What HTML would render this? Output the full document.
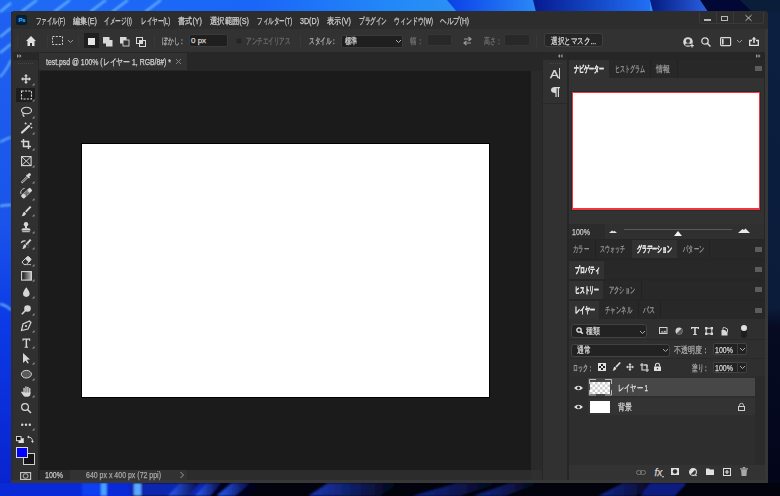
<!DOCTYPE html>
<html><head><meta charset="utf-8">
<style>
html,body{margin:0;padding:0;}
body{width:780px;height:496px;position:relative;overflow:hidden;background:#1a5ae6;font-family:"Liberation Sans",sans-serif;color:#cfcfcf;font-size:9px;}
.a{position:absolute;}
.t{position:absolute;white-space:nowrap;line-height:10px;height:10px;-webkit-text-stroke:0.25px currentColor;}
.t>span{display:inline-block;transform-origin:0 50%;}
svg{position:absolute;overflow:visible;}
</style></head><body>
<svg style="left:0;top:0" width="780" height="496" viewBox="0 0 780 496">
<defs>
<linearGradient id="wt" x1="0" y1="0" x2="1" y2="0">
<stop offset="0" stop-color="#1f6af4"/><stop offset="0.33" stop-color="#1a66f8"/><stop offset="0.5" stop-color="#2288f8"/><stop offset="0.58" stop-color="#2a90f5"/>
</linearGradient>
<linearGradient id="wt2" x1="0" y1="0" x2="1" y2="0">
<stop offset="0" stop-color="#0a40e8"/><stop offset="1" stop-color="#2a88f6"/>
</linearGradient>
<linearGradient id="wt3" x1="0" y1="0" x2="1" y2="0">
<stop offset="0" stop-color="#061a90"/><stop offset="1" stop-color="#2070f5"/>
</linearGradient>
<linearGradient id="wt4" x1="0" y1="0" x2="1" y2="0">
<stop offset="0" stop-color="#041a80"/><stop offset="1" stop-color="#2a60e0"/>
</linearGradient>
<linearGradient id="wl" x1="0" y1="0" x2="0" y2="1">
<stop offset="0" stop-color="#1e62f2"/><stop offset="0.45" stop-color="#1a54ea"/><stop offset="0.65" stop-color="#0c3ae6"/><stop offset="1" stop-color="#0822cc"/>
</linearGradient>
<linearGradient id="wr" x1="0" y1="0" x2="0" y2="1">
<stop offset="0" stop-color="#0c1f40"/><stop offset="0.62" stop-color="#0b1c3a"/><stop offset="0.66" stop-color="#060b22"/><stop offset="1" stop-color="#03051a"/>
</linearGradient>
<filter id="bl" x="-50%" y="-50%" width="200%" height="200%"><feGaussianBlur stdDeviation="1"/></filter>
</defs>
<rect width="780" height="496" fill="#0b1c3a"/>
<rect x="0" y="0" width="11" height="496" fill="url(#wl)"/>
<rect x="768" y="0" width="12" height="496" fill="url(#wr)"/>
<rect x="0" y="0" width="780" height="12" fill="url(#wt)"/>
<polygon points="447,0 535,0 535,12 457,12" fill="url(#wt2)"/>
<polygon points="533,0 650,0 650,12 536,12" fill="url(#wt3)"/>
<polygon points="650,0 700,0 708,12 653,12" fill="url(#wt4)"/>
<polygon points="700,0 750,0 755,12 708,12" fill="#020836"/>
<polygon points="740,0 780,0 780,12 752,12" fill="#0a1e3a"/>
<g stroke="#80ccff" stroke-width="1.8" filter="url(#bl)" opacity="0.85">
<path d="M21 12 L37 0 M54 12 L70 0 M90 12 L106 0 M112 12 L128 0 M145 12 L161 0"/>
<path d="M0 12 L11 3 M0 37 L11 28 M0 53 L11 44 M0 77 Q6 71 11 60 M0 142 Q6 139 11 137 M0 206 Q6 205 11 205 M0 304 Q6 305 11 310" fill="none"/>
</g>
<rect x="0" y="483" width="780" height="13" fill="#02030c"/>
<rect x="0" y="483" width="132" height="13" fill="#0a2ad8"/>
<linearGradient id="bb" x1="0" y1="0" x2="1" y2="0"><stop offset="0" stop-color="#2a5cff"/><stop offset="1" stop-color="#050a40"/></linearGradient>
<linearGradient id="bb2" x1="0" y1="0" x2="1" y2="0"><stop offset="0" stop-color="#1a38b8"/><stop offset="1" stop-color="#02030c"/></linearGradient>
<linearGradient id="bb3" x1="0" y1="0" x2="1" y2="0"><stop offset="0" stop-color="#142a9a"/><stop offset="1" stop-color="#02030c"/></linearGradient>
<g filter="url(#bl)">
<rect x="82" y="483" width="20" height="13" fill="#1040f0"/>
<rect x="101" y="483" width="6" height="13" fill="#4aa0ff"/>
<rect x="130" y="483" width="80" height="13" fill="#0a28b0"/>
<rect x="134" y="483" width="7" height="13" fill="#5aa8ff"/>
<polygon points="168,496 180,483 200,483 188,496" fill="url(#bb)"/>
<polygon points="195,496 207,483 222,483 210,496" fill="url(#bb)"/>
<polygon points="210,496 222,483 260,483 250,496" fill="#03051a"/>
<polygon points="217,496 232,483 250,483 235,496" fill="url(#bb)"/>
<polygon points="308,496 328,483 400,483 380,496" fill="url(#bb2)"/>
<polygon points="412,496 457,483 500,483 460,496" fill="url(#bb3)"/>
<polygon points="473,496 510,483 540,483 505,496" fill="url(#bb3)"/>
<polygon points="598,496 623,483 660,483 635,496" fill="url(#bb3)"/>
<polygon points="640,496 650,483 687,483 675,496" fill="#0a1a80"/>
</g>
</svg>
<div class="a" style="left:11px;top:11px;width:757px;height:472px;background:#2d2d2d;border-radius:3px 3px 0 0;"></div>
<div class="a" style="left:765px;top:29px;width:3px;height:454px;background:#373737;"></div>
<div class="a" style="left:11px;top:480px;width:757px;height:3px;background:#373737;"></div>
<div class="a" style="left:13px;top:29px;width:752px;height:23px;background:#323232;"></div>
<div class="a" style="left:13px;top:52px;width:25px;height:8px;background:#282828;"></div>
<div class="a" style="left:13px;top:60px;width:25px;height:420px;background:#303030;"></div>
<div class="a" style="left:38px;top:52px;width:2px;height:428px;background:#242424;"></div>
<div class="a" style="left:38px;top:52px;width:504px;height:19px;background:#272727;"></div>
<div class="a" style="left:39px;top:53px;width:148px;height:17px;background:#323232;"></div>
<div class="a" style="left:40px;top:71px;width:491px;height:399px;background:#1b1b1b;"></div>
<div class="a" style="left:531px;top:71px;width:11px;height:409px;background:#2a2a2a;"></div>
<div class="a" style="left:40px;top:470px;width:502px;height:10px;background:#2c2c2c;"></div>
<div class="a" style="left:531px;top:470px;width:11px;height:10px;background:#2f2f2f;"></div>
<div class="a" style="left:40px;top:470px;width:30px;height:10px;background:#2a2a2a;"></div>
<div class="a" style="left:70px;top:470px;width:117px;height:10px;background:#323232;"></div>
<div class="a" style="left:81px;top:143px;width:409px;height:255px;background:#000;"></div>
<div class="a" style="left:82px;top:144px;width:407px;height:253px;background:#fff;"></div>
<div class="a" style="left:542px;top:52px;width:1px;height:428px;background:#262626;"></div>
<div class="a" style="left:567px;top:52px;width:2px;height:428px;background:#262626;"></div>
<div class="a" style="left:543px;top:52px;width:24px;height:8px;background:#282828;"></div>
<div class="a" style="left:543px;top:60px;width:24px;height:420px;background:#313131;"></div>
<div class="a" style="left:543px;top:103px;width:24px;height:1px;background:#282828;"></div>
<div class="a" style="left:569px;top:52px;width:196px;height:428px;background:#262626;"></div>
<div class="a" style="left:569px;top:60px;width:195px;height:18px;background:#282828;"></div>
<div class="a" style="left:569px;top:60px;width:40px;height:18px;background:#323232;"></div>
<div class="a" style="left:569px;top:78px;width:195px;height:146px;background:#323232;"></div>
<div class="a" style="left:571px;top:91px;width:190px;height:120px;background:#272b2b;"></div>
<div class="a" style="left:572px;top:92px;width:188px;height:118px;background:#f0363c;"></div>
<div class="a" style="left:573px;top:93px;width:186px;height:115px;background:#fff;"></div>
<div class="a" style="left:569px;top:224px;width:36px;height:15px;background:#2b2b2b;"></div>
<div class="a" style="left:605px;top:224px;width:159px;height:15px;background:#303030;"></div>
<div class="a" style="left:569px;top:240px;width:195px;height:18px;background:#282828;"></div>
<div class="a" style="left:632px;top:240px;width:45px;height:18px;background:#323232;"></div>
<div class="a" style="left:569px;top:261px;width:195px;height:18px;background:#282828;"></div>
<div class="a" style="left:569px;top:261px;width:35px;height:18px;background:#323232;"></div>
<div class="a" style="left:569px;top:281px;width:195px;height:18px;background:#282828;"></div>
<div class="a" style="left:569px;top:281px;width:34px;height:18px;background:#323232;"></div>
<div class="a" style="left:569px;top:301px;width:195px;height:18px;background:#282828;"></div>
<div class="a" style="left:569px;top:301px;width:30px;height:18px;background:#323232;"></div>
<div class="a" style="left:569px;top:319px;width:196px;height:161px;background:#2f2f2f;"></div>
<div class="a" style="left:569px;top:376px;width:186px;height:89px;background:#2e2e2e;"></div>
<div class="a" style="left:755px;top:376px;width:10px;height:89px;background:#2b2b2b;"></div>
<div class="a" style="left:588px;top:378px;width:167px;height:18px;background:#474747;"></div>
<div class="a" style="left:588px;top:398px;width:167px;height:17px;background:#333333;"></div>
<div class="a" style="left:569px;top:465px;width:196px;height:15px;background:#333333;"></div>
<div class="a" style="left:16px;top:15px;width:10.5px;height:10px;background:#001e36;border-radius:2px;"></div>
<div class="t" style="left:18.6px;top:15.2px;font-size:6px;font-weight:bold;color:#31a8ff;letter-spacing:-0.35px;-webkit-text-stroke:0.15px #31a8ff;">Ps</div>
<div class="t fit" style="left:36px;top:15.5px;width:29px;font-size:9px;color:#d0d0d0;">ファイル(F)</div>
<div class="t fit" style="left:73px;top:15.5px;width:24px;font-size:9px;color:#d0d0d0;">編集(E)</div>
<div class="t fit" style="left:104px;top:15.5px;width:28px;font-size:9px;color:#d0d0d0;">イメージ(I)</div>
<div class="t fit" style="left:141px;top:15.5px;width:29px;font-size:9px;color:#d0d0d0;">レイヤー(L)</div>
<div class="t fit" style="left:178px;top:15.5px;width:24px;font-size:9px;color:#d0d0d0;">書式(Y)</div>
<div class="t fit" style="left:210px;top:15.5px;width:39px;font-size:9px;color:#d0d0d0;">選択範囲(S)</div>
<div class="t fit" style="left:257px;top:15.5px;width:35px;font-size:9px;color:#d0d0d0;">フィルター(T)</div>
<div class="t fit" style="left:300px;top:15.5px;width:19px;font-size:9px;color:#d0d0d0;">3D(D)</div>
<div class="t fit" style="left:327px;top:15.5px;width:24px;font-size:9px;color:#d0d0d0;">表示(V)</div>
<div class="t fit" style="left:359px;top:15.5px;width:28px;font-size:9px;color:#d0d0d0;">プラグイン</div>
<div class="t fit" style="left:394px;top:15.5px;width:39px;font-size:9px;color:#d0d0d0;">ウィンドウ(W)</div>
<div class="t fit" style="left:440px;top:15.5px;width:29px;font-size:9px;color:#d0d0d0;">ヘルプ(H)</div>
<div class="a" style="left:17px;top:35px;width:1px;height:12px;background:#393939;"></div>
<div class="a" style="left:47px;top:35px;width:1px;height:12px;background:#393939;"></div>
<div class="a" style="left:78px;top:35px;width:1px;height:12px;background:#393939;"></div>
<div class="a" style="left:154px;top:35px;width:1px;height:12px;background:#393939;"></div>
<div class="a" style="left:300px;top:35px;width:1px;height:12px;background:#393939;"></div>
<div class="a" style="left:536px;top:35px;width:1px;height:12px;background:#393939;"></div>
<svg style="left:26px;top:36px" width="10" height="10" viewBox="0 0 10 10"><path d="M5 0 L10 5 L8.5 5 L8.5 10 L6 10 L6 7 L4 7 L4 10 L1.5 10 L1.5 5 L0 5 Z" fill="#e0e0e0"/></svg>
<svg style="left:52px;top:36px" width="11" height="9" viewBox="0 0 11 9"><rect x="0.5" y="0.5" width="10" height="8" fill="none" stroke="#cfcfcf" stroke-width="1" stroke-dasharray="2 1.3"/></svg>
<svg style="left:68px;top:40px" width="5" height="3" viewBox="0 0 5 3"><path d="M0 0 L2.5 2.5 L5 0" fill="none" stroke="#9a9a9a" stroke-width="1"/></svg>
<div class="a" style="left:84px;top:33px;width:15px;height:15px;background:#1f1f1f;"></div>
<div class="a" style="left:88px;top:38px;width:7px;height:7px;background:#e6e6e6;"></div>
<svg style="left:103px;top:37px" width="10" height="10" viewBox="0 0 10 10"><rect x="0" y="0" width="6.5" height="6.5" fill="#d8d8d8"/><rect x="3" y="3" width="6.5" height="6.5" fill="#d8d8d8"/></svg>
<svg style="left:120px;top:37px" width="10" height="10" viewBox="0 0 10 10"><rect x="0" y="0" width="6.5" height="6.5" fill="#d8d8d8"/><rect x="3" y="3" width="6" height="6" fill="#323232" stroke="#d8d8d8" stroke-width="0.9"/></svg>
<svg style="left:136px;top:37px" width="10" height="9" viewBox="0 0 10 9"><rect x="0.5" y="0.5" width="6" height="6" fill="none" stroke="#d8d8d8" stroke-width="1"/><rect x="3.5" y="3.5" width="6" height="6" fill="none" stroke="#d8d8d8" stroke-width="1"/><rect x="3.5" y="3.5" width="3" height="3" fill="#d8d8d8"/></svg>
<div class="t fit" style="left:162px;top:35.5px;width:23px;font-size:9px;color:#b4b4b4;">ぼかし：</div>
<div class="a" style="left:189px;top:34px;width:39px;height:13px;background:#1f1f1f;box-sizing:border-box;border:1px solid #3a3a3a;border-radius:2px;"></div>
<div class="t fit" style="left:191px;top:35.5px;font-size:8px;color:#d8d8d8;">0 px</div>
<div class="a" style="left:236px;top:38px;width:6px;height:6px;background:#242424;box-sizing:border-box;border:1px solid #2e2e2e;"></div>
<div class="t fit" style="left:246px;top:35.5px;width:44px;font-size:9px;color:#6e6e6e;">アンチエイリアス</div>
<div class="t fit" style="left:309px;top:35.5px;width:28px;font-size:9px;color:#b4b4b4;">スタイル：</div>
<div class="a" style="left:341px;top:35px;width:62px;height:13px;background:#1f1f1f;box-sizing:border-box;border:1px solid #3a3a3a;border-radius:2px;"></div>
<div class="t fit" style="left:345px;top:36px;width:12px;font-size:9px;color:#d8d8d8;">標準</div>
<svg style="left:396px;top:40px" width="5" height="3" viewBox="0 0 5 3"><path d="M0 0 L2.5 2.5 L5 0" fill="none" stroke="#b0b0b0" stroke-width="1"/></svg>
<div class="t fit" style="left:410px;top:35.5px;width:13px;font-size:9px;color:#6e6e6e;">幅：</div>
<div class="a" style="left:427px;top:34px;width:25px;height:12px;background:#282828;box-sizing:border-box;border:1px solid #353535;border-radius:2px;"></div>
<svg style="left:463px;top:36px" width="9" height="10" viewBox="0 0 9 10"><path d="M1 3 L7.5 3 M5.5 1 L8 3 L5.5 5 M8 7 L1.5 7 M3.5 5 L1 7 L3.5 9" fill="none" stroke="#9a9a9a" stroke-width="1.2"/></svg>
<div class="t fit" style="left:484px;top:35.5px;width:18px;font-size:9px;color:#6e6e6e;">高さ：</div>
<div class="a" style="left:504px;top:34px;width:26px;height:12px;background:#282828;box-sizing:border-box;border:1px solid #353535;border-radius:2px;"></div>
<div class="a" style="left:544px;top:33px;width:59px;height:14px;background:#262626;box-sizing:border-box;border:1px solid #3e3e3e;border-radius:3px;"></div>
<div class="t fit" style="left:551px;top:35.5px;width:45px;font-size:9px;color:#d8d8d8;">選択とマスク...</div>
<svg style="left:683px;top:37px" width="11" height="10" viewBox="0 0 11 10"><circle cx="5" cy="5" r="4.8" fill="#d8d8d8"/><circle cx="5" cy="4" r="2.1" fill="#3a3a3a"/><path d="M1.6 8.6 Q2.4 6.2 5 6.2 Q7.6 6.2 8.4 8.6 Z" fill="#3a3a3a"/><circle cx="9" cy="8.6" r="2.2" fill="#323232"/><path d="M9 6.8 V10.4 M7.2 8.6 H10.8" stroke="#d8d8d8" stroke-width="1.1"/></svg>
<svg style="left:701px;top:37px" width="10" height="10" viewBox="0 0 10 10"><circle cx="4" cy="4" r="3.2" fill="none" stroke="#d8d8d8" stroke-width="1.3"/><path d="M6.5 6.5 L9.5 9.5" stroke="#d8d8d8" stroke-width="1.5"/></svg>
<svg style="left:720px;top:37px" width="11" height="9" viewBox="0 0 11 9"><rect x="0.6" y="0.6" width="10" height="8" rx="0.8" fill="none" stroke="#d8d8d8" stroke-width="1.2"/><rect x="2" y="1.8" width="1.6" height="5.6" fill="#d8d8d8"/></svg>
<svg style="left:737px;top:40px" width="5" height="3" viewBox="0 0 5 3"><path d="M0 0 L2.5 2.5 L5 0" fill="none" stroke="#9a9a9a" stroke-width="1"/></svg>
<svg style="left:749px;top:36px" width="10" height="10" viewBox="0 0 10 10"><path d="M3 4.5 H0.7 V9.3 H9.3 V4.5 H7" fill="none" stroke="#e0e0e0" stroke-width="1.3"/><path d="M5 7 V1.5" stroke="#e0e0e0" stroke-width="1.5"/><path d="M2.6 3.6 L5 1 L7.4 3.6 Z" fill="#e0e0e0"/></svg>
<div class="a" style="left:699px;top:12px;width:65px;height:12px;background:transparent;box-sizing:border-box;border:1px solid #3a3a3a;border-top:none;border-radius:0 0 3px 3px;"></div>
<div class="a" style="left:716px;top:12px;width:1px;height:11px;background:#3a3a3a;"></div>
<div class="a" style="left:733px;top:12px;width:1px;height:11px;background:#3a3a3a;"></div>
<div class="a" style="left:704px;top:19px;width:7px;height:1.5px;background:#b8b8b8;"></div>
<div class="a" style="left:721px;top:16px;width:7px;height:5px;background:transparent;box-sizing:border-box;border:1px solid #b8b8b8;"></div>
<svg style="left:745px;top:15px" width="7" height="6" viewBox="0 0 7 6"><path d="M0.5 0.2 L6.5 5.8 M6.5 0.2 L0.5 5.8" stroke="#c0c0c0" stroke-width="1"/></svg>
<div class="t fit" style="left:46px;top:56.5px;width:125px;font-size:9px;color:#d4d4d4;">test.psd @ 100% (レイヤー 1, RGB/8#) *</div>
<svg style="left:176px;top:59px" width="5" height="5" viewBox="0 0 5 5"><path d="M0 0 L5 5 M5 0 L0 5" stroke="#8a8a8a" stroke-width="0.9"/></svg>
<svg style="left:17px;top:54px" width="5" height="4" viewBox="0 0 5 4"><path d="M0 0 L2 2 L0 4 Z M2.5 0 L4.5 2 L2.5 4 Z" fill="#9a9a9a"/></svg>
<svg style="left:558px;top:54px" width="5" height="4" viewBox="0 0 5 4"><path d="M2 0 L0 2 L2 4 Z M4.5 0 L2.5 2 L4.5 4 Z" fill="#9a9a9a"/></svg>
<svg style="left:756px;top:54px" width="5" height="4" viewBox="0 0 5 4"><path d="M0 0 L2 2 L0 4 Z M2.5 0 L4.5 2 L2.5 4 Z" fill="#9a9a9a"/></svg>
<div class="a" style="left:18px;top:63px;width:15px;height:1px;background:transparent;border-top:1px dotted #454545;"></div>
<div class="a" style="left:549px;top:63px;width:13px;height:1px;background:transparent;border-top:1px dotted #454545;"></div>
<div class="t fit" style="left:45px;top:470px;width:18px;font-size:9px;color:#c8c8c8;">100%</div>
<div class="t fit" style="left:86px;top:470px;width:75px;font-size:9px;color:#a8a8a8;">640 px x 400 px (72 ppi)</div>
<svg style="left:180px;top:472px" width="4" height="6" viewBox="0 0 4 6"><path d="M0.5 0 L3.5 3 L0.5 6" fill="none" stroke="#9a9a9a" stroke-width="1"/></svg>
<div class="t fit" style="left:550px;top:69px;width:9px;font-size:11px;color:#d8d8d8;">A</div>
<div class="a" style="left:559px;top:68px;width:1px;height:11px;background:#d0d0d0;"></div>
<svg style="left:551px;top:87px" width="9" height="10" viewBox="0 0 9 10"><path d="M4 0 H9 V1.2 H8 V10 H6.8 V1.2 H5.6 V10 H4.4 V6 Q0 6 0 3 Q0 0 4 0 Z" fill="#d8d8d8"/></svg>
<div class="t fit" style="left:574px;top:63.5px;width:30px;font-size:9px;color:#e4e4e4;font-weight:bold;">ナビゲーター</div>
<div class="t fit" style="left:615px;top:63.5px;width:30px;font-size:9px;color:#9c9c9c;">ヒストグラム</div>
<div class="a" style="left:650px;top:60px;width:1px;height:18px;background:#222;"></div>
<div class="t fit" style="left:656px;top:63.5px;width:14px;font-size:9px;color:#9c9c9c;">情報</div>
<div class="a" style="left:677px;top:60px;width:1px;height:18px;background:#222;"></div>
<div class="a" style="left:755px;top:66px;width:7px;height:5px;background:#5c5c5c;"></div>
<div class="a" style="left:755px;top:247px;width:7px;height:5px;background:#5c5c5c;"></div>
<div class="a" style="left:755px;top:267px;width:7px;height:5px;background:#5c5c5c;"></div>
<div class="a" style="left:755px;top:287px;width:7px;height:5px;background:#5c5c5c;"></div>
<div class="a" style="left:755px;top:308px;width:7px;height:5px;background:#5c5c5c;"></div>
<div class="t fit" style="left:572px;top:226.5px;width:18px;font-size:9px;color:#c8c8c8;">100%</div>
<svg style="left:609px;top:230px" width="8" height="3" viewBox="0 0 8 3"><path d="M0 3 L3 0.5 L4.5 1.5 L5.5 0.8 L8 3 Z" fill="#e0e0e0"/></svg>
<div class="a" style="left:624px;top:229px;width:108px;height:1px;background:#5a5a5a;"></div>
<svg style="left:674px;top:231px" width="8" height="5" viewBox="0 0 8 5"><path d="M4 0 L8 5 L0 5 Z" fill="#f0f0f0"/></svg>
<svg style="left:738px;top:228px" width="12" height="5" viewBox="0 0 12 5"><path d="M0 5 L4.5 1 L6 2 L7.5 0.5 L12 5 Z" fill="#e8e8e8"/></svg>
<div class="t fit" style="left:573px;top:244px;width:16px;font-size:9px;color:#9c9c9c;">カラー</div>
<div class="a" style="left:595px;top:240px;width:1px;height:18px;background:#222;"></div>
<div class="t fit" style="left:600px;top:244px;width:25px;font-size:9px;color:#9c9c9c;">スウォッチ</div>
<div class="t fit" style="left:637px;top:244px;width:35px;font-size:9px;color:#e4e4e4;font-weight:bold;">グラデーション</div>
<div class="t fit" style="left:683px;top:244px;width:21px;font-size:9px;color:#9c9c9c;">パターン</div>
<div class="a" style="left:709px;top:240px;width:1px;height:18px;background:#222;"></div>
<div class="t fit" style="left:575px;top:264.5px;width:25px;font-size:9px;color:#e4e4e4;font-weight:bold;">プロパティ</div>
<div class="t fit" style="left:575px;top:284.5px;width:24px;font-size:9px;color:#e4e4e4;font-weight:bold;">ヒストリー</div>
<div class="t fit" style="left:609px;top:284.5px;width:26px;font-size:9px;color:#9c9c9c;">アクション</div>
<div class="a" style="left:641px;top:281px;width:1px;height:18px;background:#222;"></div>
<div class="t fit" style="left:575px;top:304.5px;width:20px;font-size:9px;color:#e4e4e4;font-weight:bold;">レイヤー</div>
<div class="t fit" style="left:605px;top:304.5px;width:27px;font-size:9px;color:#9c9c9c;">チャンネル</div>
<div class="a" style="left:638px;top:301px;width:1px;height:17px;background:#222;"></div>
<div class="t fit" style="left:643px;top:304.5px;width:12px;font-size:9px;color:#9c9c9c;">パス</div>
<div class="a" style="left:660px;top:301px;width:1px;height:17px;background:#222;"></div>
<div class="a" style="left:16px;top:88px;width:19px;height:14px;background:#1e1e1e;"></div>
<svg style="left:21px;top:74px" width="11" height="10" viewBox="0 0 11 10"><path d="M5 0 L7 2.2 H5.7 V4.3 H7.8 V3 L10 5 L7.8 7 V5.7 H5.7 V7.8 H7 L5 10 L3 7.8 H4.3 V5.7 H2.2 V7 L0 5 L2.2 3 V4.3 H4.3 V2.2 H3 Z" fill="#d6d6d6"/></svg>
<svg style="left:32px;top:82.5px" width="2.5" height="2.5" viewBox="0 0 2.5 2.5"><path d="M2.5 0 L2.5 2.5 L0 2.5 Z" fill="#909090"/></svg>
<svg style="left:21px;top:90px" width="11" height="10" viewBox="0 0 11 10"><rect x="0.5" y="1" width="10" height="8" fill="none" stroke="#d6d6d6" stroke-width="1.1" stroke-dasharray="2.2 1.2"/></svg>
<svg style="left:32px;top:98.5px" width="2.5" height="2.5" viewBox="0 0 2.5 2.5"><path d="M2.5 0 L2.5 2.5 L0 2.5 Z" fill="#909090"/></svg>
<svg style="left:21px;top:107px" width="11" height="10" viewBox="0 0 11 10"><ellipse cx="5.5" cy="3.5" rx="5" ry="3.2" fill="none" stroke="#d6d6d6" stroke-width="1.1"/><path d="M2 6 Q1.5 9 3.5 9.5" fill="none" stroke="#d6d6d6" stroke-width="1.1"/></svg>
<svg style="left:32px;top:115.5px" width="2.5" height="2.5" viewBox="0 0 2.5 2.5"><path d="M2.5 0 L2.5 2.5 L0 2.5 Z" fill="#909090"/></svg>
<svg style="left:21px;top:123px" width="11" height="10" viewBox="0 0 11 10"><path d="M1 9.5 L8 3" stroke="#d6d6d6" stroke-width="2.3" stroke-linecap="round"/><circle cx="4.6" cy="0.6" r="1" fill="#d6d6d6"/><circle cx="9.8" cy="0.7" r="1" fill="#d6d6d6"/><circle cx="10.5" cy="4.6" r="0.9" fill="#d6d6d6"/></svg>
<svg style="left:32px;top:131.5px" width="2.5" height="2.5" viewBox="0 0 2.5 2.5"><path d="M2.5 0 L2.5 2.5 L0 2.5 Z" fill="#909090"/></svg>
<svg style="left:21px;top:139px" width="11" height="10" viewBox="0 0 11 10"><path d="M2.5 0 V7.5 H10 M0 2.5 H7.5 V10" fill="none" stroke="#d6d6d6" stroke-width="1.5"/></svg>
<svg style="left:32px;top:147.5px" width="2.5" height="2.5" viewBox="0 0 2.5 2.5"><path d="M2.5 0 L2.5 2.5 L0 2.5 Z" fill="#909090"/></svg>
<svg style="left:21px;top:156px" width="11" height="10" viewBox="0 0 11 10"><rect x="0.6" y="0.6" width="9.5" height="9" fill="none" stroke="#d6d6d6" stroke-width="1.1"/><path d="M0.6 0.6 L10 9.6 M10 0.6 L0.6 9.6" stroke="#d6d6d6" stroke-width="1"/></svg>
<svg style="left:32px;top:164.5px" width="2.5" height="2.5" viewBox="0 0 2.5 2.5"><path d="M2.5 0 L2.5 2.5 L0 2.5 Z" fill="#909090"/></svg>
<svg style="left:21px;top:172.5px" width="11" height="10" viewBox="0 0 11 10"><path d="M1 10 L0.8 8.6 L6 3.4 L7 4.4 L1.8 9.6 Z" fill="none" stroke="#d6d6d6" stroke-width="1"/><path d="M5 2.5 L8 5.5 L9 4.5 L8.2 3.7 L10 2 Q10 0 8 0 L6.3 1.8 L5.8 1.5 Z" fill="#d6d6d6"/></svg>
<svg style="left:32px;top:181.0px" width="2.5" height="2.5" viewBox="0 0 2.5 2.5"><path d="M2.5 0 L2.5 2.5 L0 2.5 Z" fill="#909090"/></svg>
<svg style="left:21px;top:189px" width="11" height="10" viewBox="0 0 11 10"><g transform="translate(5.6,4.2) rotate(-43)"><rect x="-6.2" y="-2.1" width="12.4" height="4.2" rx="1.2" fill="#d6d6d6"/><rect x="-2.4" y="-2.1" width="4.8" height="4.2" fill="#8c8c8c"/><path d="M-2.4 -2.1 L2.4 2.1 M2.4 -2.1 L-2.4 2.1" stroke="#5a5a5a" stroke-width="0.6"/></g><path d="M-0.2 5 Q-0.8 0.2 3.6 -0.6" fill="none" stroke="#d6d6d6" stroke-width="0.9"/></svg>
<svg style="left:32px;top:197.5px" width="2.5" height="2.5" viewBox="0 0 2.5 2.5"><path d="M2.5 0 L2.5 2.5 L0 2.5 Z" fill="#909090"/></svg>
<svg style="left:21px;top:205.5px" width="11" height="10" viewBox="0 0 11 10"><path d="M9 0 L10.4 1.3 L5.4 6.6 L4 5.3 Z" fill="#d6d6d6"/><path d="M3.5 5.7 L5 7.2 Q4.6 10.2 0.6 10.3 Q1.5 9.2 1.7 7.8 Q2 6.1 3.5 5.7 Z" fill="#d6d6d6"/></svg>
<svg style="left:32px;top:214.0px" width="2.5" height="2.5" viewBox="0 0 2.5 2.5"><path d="M2.5 0 L2.5 2.5 L0 2.5 Z" fill="#909090"/></svg>
<svg style="left:21px;top:222px" width="11" height="10" viewBox="0 0 11 10"><circle cx="5" cy="2.2" r="2.2" fill="#d6d6d6"/><rect x="4" y="3.5" width="2" height="2.8" fill="#d6d6d6"/><path d="M0.5 8 Q0.5 6.2 2.5 6.2 H7.5 Q9.5 6.2 9.5 8 V8.6 H0.5 Z" fill="#d6d6d6"/><rect x="1.2" y="9.2" width="7.6" height="1" fill="#d6d6d6"/></svg>
<svg style="left:32px;top:230.5px" width="2.5" height="2.5" viewBox="0 0 2.5 2.5"><path d="M2.5 0 L2.5 2.5 L0 2.5 Z" fill="#909090"/></svg>
<svg style="left:21px;top:238.5px" width="11" height="10" viewBox="0 0 11 10"><path d="M9 0 L10.4 1.3 L5.8 6.2 L4.4 4.9 Z" fill="#d6d6d6"/><path d="M3.9 5.3 L5.4 6.8 Q5 9.8 1.2 10 Q2 8.9 2.2 7.5 Q2.5 5.8 3.9 5.3 Z" fill="#d6d6d6"/><path d="M0.3 4 Q1 1.6 4.6 2" fill="none" stroke="#d6d6d6" stroke-width="1.2"/><path d="M7 4.5 Q8.6 7 6.6 9" fill="none" stroke="#8a8a8a" stroke-width="0.7" stroke-dasharray="1 0.8"/></svg>
<svg style="left:32px;top:247.0px" width="2.5" height="2.5" viewBox="0 0 2.5 2.5"><path d="M2.5 0 L2.5 2.5 L0 2.5 Z" fill="#909090"/></svg>
<svg style="left:21px;top:255px" width="11" height="10" viewBox="0 0 11 10"><path d="M1 7 L6.2 1.8 Q7 1 7.8 1.8 L9.6 3.6 Q10.4 4.4 9.6 5.2 L5.2 9.6 H3 Z" fill="none" stroke="#d6d6d6" stroke-width="1"/><path d="M4.2 3.8 L6.2 1.8 Q7 1 7.8 1.8 L9.6 3.6 Q10.4 4.4 9.6 5.2 L7.6 7.2 Z" fill="#d6d6d6"/><path d="M5.2 9.6 H10" stroke="#d6d6d6" stroke-width="0.8"/></svg>
<svg style="left:32px;top:263.5px" width="2.5" height="2.5" viewBox="0 0 2.5 2.5"><path d="M2.5 0 L2.5 2.5 L0 2.5 Z" fill="#909090"/></svg>
<svg style="left:21px;top:270.5px" width="11" height="10" viewBox="0 0 11 10"><defs><linearGradient id="gg"><stop offset="0" stop-color="#111"/><stop offset="1" stop-color="#bbb"/></linearGradient></defs><rect x="0.6" y="0.6" width="9.8" height="8.5" fill="url(#gg)" stroke="#d6d6d6" stroke-width="1.1"/></svg>
<svg style="left:32px;top:279.0px" width="2.5" height="2.5" viewBox="0 0 2.5 2.5"><path d="M2.5 0 L2.5 2.5 L0 2.5 Z" fill="#909090"/></svg>
<svg style="left:21px;top:287px" width="11" height="10" viewBox="0 0 11 10"><path d="M5.3 0.2 Q8.6 4.6 8.6 6.6 A3.3 3.3 0 0 1 2 6.6 Q2 4.6 5.3 0.2 Z" fill="#d6d6d6"/></svg>
<svg style="left:32px;top:295.5px" width="2.5" height="2.5" viewBox="0 0 2.5 2.5"><path d="M2.5 0 L2.5 2.5 L0 2.5 Z" fill="#909090"/></svg>
<svg style="left:21px;top:304.5px" width="11" height="10" viewBox="0 0 11 10"><circle cx="6.5" cy="3.5" r="3.3" fill="#d6d6d6"/><path d="M4.5 5.5 L0.8 9.2" stroke="#d6d6d6" stroke-width="1.6"/></svg>
<svg style="left:32px;top:313.0px" width="2.5" height="2.5" viewBox="0 0 2.5 2.5"><path d="M2.5 0 L2.5 2.5 L0 2.5 Z" fill="#909090"/></svg>
<svg style="left:21px;top:321px" width="11" height="10" viewBox="0 0 11 10"><path d="M10 1.5 L8.5 0 L2 3 L0.5 9.5 L7 8 L10 1.5 Z" fill="none" stroke="#d6d6d6" stroke-width="1.2"/><circle cx="5" cy="5" r="1.1" fill="#d6d6d6"/></svg>
<svg style="left:32px;top:329.5px" width="2.5" height="2.5" viewBox="0 0 2.5 2.5"><path d="M2.5 0 L2.5 2.5 L0 2.5 Z" fill="#909090"/></svg>
<svg style="left:21px;top:337.5px" width="11" height="10" viewBox="0 0 11 10"><path d="M1.5 0.5 H9.2 V3 H8.4 L8.1 1.8 H6.1 V8.5 L7.1 9 V9.8 H3.6 V9 L4.6 8.5 V1.8 H2.6 L2.3 3 H1.5 Z" fill="#d6d6d6"/></svg>
<svg style="left:32px;top:346.0px" width="2.5" height="2.5" viewBox="0 0 2.5 2.5"><path d="M2.5 0 L2.5 2.5 L0 2.5 Z" fill="#909090"/></svg>
<svg style="left:21px;top:353px" width="11" height="10" viewBox="0 0 11 10"><path d="M2 0 L9 6.5 L5.8 6.8 L7.8 10 L6.5 10.5 L4.6 7.5 L2 10 Z" fill="#d6d6d6"/></svg>
<svg style="left:32px;top:361.5px" width="2.5" height="2.5" viewBox="0 0 2.5 2.5"><path d="M2.5 0 L2.5 2.5 L0 2.5 Z" fill="#909090"/></svg>
<svg style="left:21px;top:369.6px" width="11" height="10" viewBox="0 0 11 10"><ellipse cx="5.4" cy="4.2" rx="5" ry="3.8" fill="#5a5a5a" stroke="#d6d6d6" stroke-width="1"/></svg>
<svg style="left:32px;top:378.1px" width="2.5" height="2.5" viewBox="0 0 2.5 2.5"><path d="M2.5 0 L2.5 2.5 L0 2.5 Z" fill="#909090"/></svg>
<svg style="left:21px;top:386px" width="11" height="10" viewBox="0 0 11 10"><g fill="#d6d6d6"><rect x="2.4" y="1.8" width="1.3" height="6" rx="0.65"/><rect x="4.3" y="0.3" width="1.3" height="6" rx="0.65"/><rect x="6.2" y="0.7" width="1.3" height="6" rx="0.65"/><rect x="8.1" y="2" width="1.3" height="6" rx="0.65"/></g><path d="M2.4 6.2 H9.4 V8 Q9.2 10.8 6.4 10.8 H4.8 Q3.2 10.8 2.1 9.3 L0.2 6.6 Q-0.1 5.6 0.9 5.4 Q1.6 5.4 2.4 6.8 Z" fill="#d6d6d6"/></svg>
<svg style="left:32px;top:394.5px" width="2.5" height="2.5" viewBox="0 0 2.5 2.5"><path d="M2.5 0 L2.5 2.5 L0 2.5 Z" fill="#909090"/></svg>
<svg style="left:21px;top:403px" width="11" height="10" viewBox="0 0 11 10"><circle cx="4" cy="4" r="3.4" fill="none" stroke="#d6d6d6" stroke-width="1.2"/><path d="M6.5 6.5 L10 10" stroke="#d6d6d6" stroke-width="1.5"/></svg>
<svg style="left:21px;top:420px" width="11" height="10" viewBox="0 0 11 10"><circle cx="1.2" cy="4.8" r="1.2" fill="#d6d6d6"/><circle cx="5" cy="4.8" r="1.2" fill="#d6d6d6"/><circle cx="8.8" cy="4.8" r="1.2" fill="#d6d6d6"/></svg>
<svg style="left:32px;top:428.0px" width="2.5" height="2.5" viewBox="0 0 2.5 2.5"><path d="M2.5 0 L2.5 2.5 L0 2.5 Z" fill="#909090"/></svg>
<svg style="left:16px;top:436px" width="8" height="7" viewBox="0 0 8 7"><rect x="2.5" y="2.2" width="5.3" height="4.8" fill="#e0e0e0"/><rect x="0.5" y="0.5" width="4.5" height="4.2" fill="#111" stroke="#e0e0e0" stroke-width="0.9"/></svg>
<svg style="left:27px;top:436px" width="7" height="7" viewBox="0 0 7 7"><path d="M1 1 Q5.5 1 5.5 5.5" fill="none" stroke="#d0d0d0" stroke-width="1"/><path d="M0 1 L2 -0.5 V2.5 Z M5.5 7 L4 5 H7 Z" fill="#d0d0d0"/></svg>
<div class="a" style="left:23px;top:453px;width:12px;height:12px;background:#151515;box-sizing:border-box;border:1px solid #d0d0d0;"></div>
<div class="a" style="left:16px;top:447px;width:12px;height:11px;background:#0000ff;box-sizing:border-box;border:1px solid #d8d8d8;"></div>
<svg style="left:20px;top:472px" width="11" height="8" viewBox="0 0 11 8"><rect x="0.6" y="0.6" width="10" height="6.8" fill="none" stroke="#c8c8c8" stroke-width="1.1"/><ellipse cx="5.6" cy="4" rx="2.5" ry="2.3" fill="none" stroke="#c8c8c8" stroke-width="0.9"/></svg>
<div class="a" style="left:569px;top:339px;width:196px;height:1px;background:#292929;"></div>
<div class="a" style="left:569px;top:358px;width:196px;height:1px;background:#292929;"></div>
<div class="a" style="left:571px;top:324px;width:76px;height:14px;background:#222222;box-sizing:border-box;border:1px solid #424242;border-radius:3px;"></div>
<svg style="left:576px;top:327px" width="7" height="8" viewBox="0 0 7 8"><circle cx="3" cy="3" r="2.2" fill="none" stroke="#e0e0e0" stroke-width="1.3"/><path d="M4.6 4.6 L6.8 6.8" stroke="#e0e0e0" stroke-width="1.6"/></svg>
<div class="t fit" style="left:586px;top:326px;width:14px;font-size:9px;color:#d8d8d8;">種類</div>
<svg style="left:640px;top:331px" width="5" height="3" viewBox="0 0 5 3"><path d="M0 0 L2.5 2.5 L5 0" fill="none" stroke="#aaa" stroke-width="1"/></svg>
<svg style="left:659px;top:327px" width="8" height="7" viewBox="0 0 8 7"><rect x="0.5" y="0.5" width="7.5" height="6" fill="none" stroke="#d0d0d0" stroke-width="1"/><path d="M1.5 5.5 L3 4 L4.5 5 L6 3.5 L7.5 5.5 Z" fill="#d0d0d0"/></svg>
<svg style="left:675px;top:327px" width="8" height="8" viewBox="0 0 8 8"><circle cx="4" cy="4" r="3.5" fill="#d0d0d0"/><path d="M6.5 1.5 L1.5 6.5 A3.5 3.5 0 0 0 6.5 1.5 Z" fill="#5a5a5a"/></svg>
<svg style="left:691px;top:327px" width="8" height="8" viewBox="0 0 8 8"><path d="M0 0 H8 V2 H7 L6.6 1.2 H4.8 V7 H5.8 V8 H2.2 V7 H3.2 V1.2 H1.4 L1 2 H0 Z" fill="#d8d8d8"/></svg>
<svg style="left:705px;top:327px" width="8" height="8" viewBox="0 0 8 8"><rect x="1.2" y="1.2" width="5.6" height="5.6" fill="none" stroke="#d8d8d8" stroke-width="1"/><rect x="0" y="0" width="2.4" height="2.4" fill="#d8d8d8"/><rect x="5.6" y="0" width="2.4" height="2.4" fill="#d8d8d8"/><rect x="0" y="5.6" width="2.4" height="2.4" fill="#d8d8d8"/><rect x="5.6" y="5.6" width="2.4" height="2.4" fill="#d8d8d8"/></svg>
<svg style="left:721px;top:327px" width="7" height="9" viewBox="0 0 7 9"><path d="M0.5 3 H4 L6.5 5.5 V8.5 H0.5 Z" fill="#d8d8d8"/><path d="M2 3 V1.2 Q2 0 3.5 0.5 L6.5 2 V5" fill="none" stroke="#d8d8d8" stroke-width="0.9"/></svg>
<div class="a" style="left:741px;top:330px;width:6px;height:8px;background:#1e1e1e;border-radius:3px;"></div>
<div class="a" style="left:741px;top:325px;width:6px;height:6px;background:#e0e0e0;border-radius:3px;"></div>
<div class="a" style="left:571px;top:344px;width:99px;height:13px;background:#222222;box-sizing:border-box;border:1px solid #424242;border-radius:3px;"></div>
<div class="t fit" style="left:577px;top:345px;width:14px;font-size:9px;color:#d8d8d8;">通常</div>
<svg style="left:663px;top:349px" width="5" height="3" viewBox="0 0 5 3"><path d="M0 0 L2.5 2.5 L5 0" fill="none" stroke="#aaa" stroke-width="1"/></svg>
<div class="t fit" style="left:674px;top:344.5px;width:35px;font-size:9px;color:#aaaaaa;">不透明度：</div>
<div class="a" style="left:713px;top:343px;width:34px;height:12px;background:#222222;box-sizing:border-box;border:1px solid #424242;border-radius:2px;"></div>
<div class="a" style="left:737px;top:343px;width:1px;height:12px;background:#3c3c3c;"></div>
<div class="t fit" style="left:715px;top:344.5px;width:18px;font-size:9px;color:#d8d8d8;">100%</div>
<svg style="left:740px;top:348px" width="5" height="3" viewBox="0 0 5 3"><path d="M0 0 L2.5 2.5 L5 0" fill="none" stroke="#aaa" stroke-width="1"/></svg>
<div class="t fit" style="left:573px;top:362.5px;width:20px;font-size:9px;color:#aaaaaa;">ロック：</div>
<svg style="left:598px;top:363px" width="8" height="8" viewBox="0 0 8 8"><rect x="0.5" y="0.5" width="7" height="7" fill="#1e1e1e" stroke="#e0e0e0" stroke-width="1"/><rect x="1" y="1" width="2" height="2" fill="#e0e0e0"/><rect x="5" y="1" width="2" height="2" fill="#e0e0e0"/><rect x="3" y="3" width="2" height="2" fill="#e0e0e0"/><rect x="1" y="5" width="2" height="2" fill="#e0e0e0"/><rect x="5" y="5" width="2" height="2" fill="#e0e0e0"/></svg>
<svg style="left:612px;top:362px" width="9" height="9" viewBox="0 0 9 9"><g transform="scale(0.85)"><path d="M9 0 L10.4 1.3 L5.4 6.6 L4 5.3 Z" fill="#e0e0e0"/><path d="M3.5 5.7 L5 7.2 Q4.6 10.2 0.6 10.3 Q1.5 9.2 1.7 7.8 Q2 6.1 3.5 5.7 Z" fill="#e0e0e0"/></g></svg>
<svg style="left:626px;top:363px" width="8" height="8" viewBox="0 0 8 8"><path d="M4 0 L5.6 1.8 H4.6 V3.4 H6.2 V2.4 L8 4 L6.2 5.6 V4.6 H4.6 V6.2 H5.6 L4 8 L2.4 6.2 H3.4 V4.6 H1.8 V5.6 L0 4 L1.8 2.4 V3.4 H3.4 V1.8 H2.4 Z" fill="#e0e0e0"/></svg>
<svg style="left:640px;top:363px" width="9" height="9" viewBox="0 0 9 9"><path d="M2 0 V7 H9 M0 2 H7 V9" fill="none" stroke="#e0e0e0" stroke-width="1.1"/><path d="M4.5 2 L7 2 L7 4.5" fill="none" stroke="#e0e0e0" stroke-width="0.8"/></svg>
<svg style="left:654px;top:363px" width="7" height="8" viewBox="0 0 7 8"><rect x="0" y="3.5" width="7" height="4.5" fill="#e0e0e0"/><path d="M1.5 3.5 V2.3 A2 2 0 0 1 5.5 2.3 V3.5" fill="none" stroke="#e0e0e0" stroke-width="1.1"/><circle cx="3.5" cy="5.7" r="0.8" fill="#323232"/></svg>
<div class="t fit" style="left:692px;top:362.5px;width:17px;font-size:9px;color:#aaaaaa;">塗り：</div>
<div class="a" style="left:713px;top:362px;width:34px;height:11px;background:#222222;box-sizing:border-box;border:1px solid #424242;border-radius:2px;"></div>
<div class="a" style="left:737px;top:362px;width:1px;height:11px;background:#3c3c3c;"></div>
<div class="t fit" style="left:715px;top:362.5px;width:18px;font-size:9px;color:#d8d8d8;">100%</div>
<svg style="left:740px;top:366px" width="5" height="3" viewBox="0 0 5 3"><path d="M0 0 L2.5 2.5 L5 0" fill="none" stroke="#aaa" stroke-width="1"/></svg>
<svg style="left:574px;top:385px" width="9" height="6" viewBox="0 0 9 6"><path d="M0 3 Q4.5 -1.6 9 3 Q4.5 7.6 0 3 Z" fill="#e2e2e2"/><circle cx="4.5" cy="3" r="1.5" fill="#262626"/></svg>
<svg style="left:574px;top:403.5px" width="9" height="6" viewBox="0 0 9 6"><path d="M0 3 Q4.5 -1.6 9 3 Q4.5 7.6 0 3 Z" fill="#e2e2e2"/><circle cx="4.5" cy="3" r="1.5" fill="#262626"/></svg>
<svg style="left:590px;top:382px" width="20" height="12" viewBox="0 0 20 12"><defs><pattern id="ck" width="5" height="5" patternUnits="userSpaceOnUse"><rect width="5" height="5" fill="#fff"/><rect width="2.5" height="2.5" fill="#cdcdcd"/><rect x="2.5" y="2.5" width="2.5" height="2.5" fill="#cdcdcd"/></pattern></defs><rect width="20" height="12" fill="url(#ck)"/></svg>
<svg style="left:589px;top:379px" width="24" height="17" viewBox="0 0 24 17"><path d="M0.5 5 V0.5 H7 M16 0.5 H22.5 V5 M22.5 11 V16 H16 M7 16 H0.5 V11" fill="none" stroke="#b8b8b8" stroke-width="1"/></svg>
<div class="a" style="left:590px;top:401px;width:20px;height:12px;background:#ffffff;"></div>
<div class="t fit" style="left:618px;top:383px;width:30px;font-size:9px;color:#e0e0e0;">レイヤー 1</div>
<div class="t fit" style="left:618px;top:401.5px;width:14px;font-size:9px;color:#d8d8d8;">背景</div>
<svg style="left:738px;top:403px" width="7" height="8" viewBox="0 0 7 8"><rect x="0.5" y="3.5" width="6" height="4" fill="none" stroke="#d0d0d0" stroke-width="1"/><path d="M1.5 3.5 V2.3 A2 2 0 0 1 5.5 2.3 V3.5" fill="none" stroke="#c0c0c0" stroke-width="1"/></svg>
<svg style="left:636px;top:470px" width="10" height="5" viewBox="0 0 10 5"><rect x="0.5" y="0.5" width="5" height="4" rx="2" fill="none" stroke="#7a7a7a" stroke-width="1"/><rect x="4.5" y="0.5" width="5" height="4" rx="2" fill="none" stroke="#7a7a7a" stroke-width="1"/></svg>
<div class="t fit" style="left:654.5px;top:467.5px;font-size:10px;color:#d0d0d0;"><i>fx</i></div>
<svg style="left:662px;top:476px" width="2" height="2" viewBox="0 0 2 2"><path d="M0 0 H2 L1 2 Z" fill="#d0d0d0"/></svg>
<svg style="left:671px;top:468px" width="8" height="7" viewBox="0 0 8 7"><rect x="0" y="0" width="8" height="7" fill="#e0e0e0"/><circle cx="4" cy="3.5" r="2.2" fill="#303030"/></svg>
<svg style="left:689px;top:468px" width="8" height="8" viewBox="0 0 8 8"><circle cx="4" cy="4" r="3.4" fill="none" stroke="#e0e0e0" stroke-width="1.1"/><path d="M6.4 1.6 L1.6 6.4 A3.4 3.4 0 0 1 6.4 1.6 Z" fill="#e0e0e0"/><path d="M6 7 H8 L7 8.5 Z" fill="#e0e0e0"/></svg>
<svg style="left:706px;top:468px" width="8" height="7" viewBox="0 0 8 7"><path d="M0 0.5 H3 L4 1.5 H8 V7 H0 Z" fill="#e0e0e0"/></svg>
<svg style="left:723px;top:468px" width="8" height="8" viewBox="0 0 8 8"><rect x="0.5" y="0.5" width="7" height="7" fill="none" stroke="#e0e0e0" stroke-width="1"/><path d="M4 2 V6 M2 4 H6" stroke="#e0e0e0" stroke-width="1.2"/></svg>
<svg style="left:740px;top:467px" width="8" height="9" viewBox="0 0 8 9"><path d="M1 2.5 H7 L6.4 9 H1.6 Z" fill="#a8a8a8"/><rect x="0" y="1.3" width="8" height="1.2" fill="#a8a8a8"/><rect x="2.8" y="0" width="2.4" height="1.3" fill="#a8a8a8"/></svg>
<script>
document.querySelectorAll('.fit').forEach(function(e){
  var w=parseFloat(e.style.width); if(!w) return;
  var s=document.createElement('span');
  while(e.firstChild) s.appendChild(e.firstChild);
  e.appendChild(s);
  var nw=s.getBoundingClientRect().width;
  if(nw>0) s.style.transform='scaleX('+(w/nw)+')';
});
</script>
</body></html>
